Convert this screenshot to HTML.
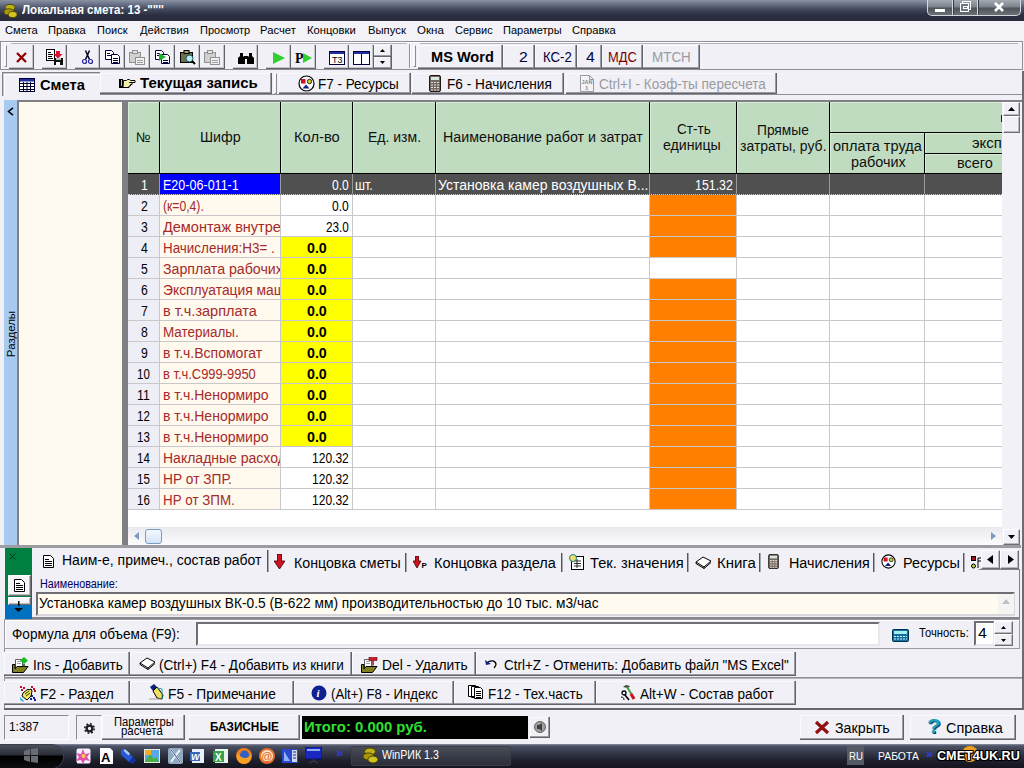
<!DOCTYPE html>
<html lang="ru">
<head>
<meta charset="utf-8">
<title>Локальная смета: 13</title>
<style>
*{box-sizing:border-box;margin:0;padding:0}
html,body{width:1024px;height:768px;overflow:hidden}
body{position:relative;background:#f0f0f6;font-family:"Liberation Sans","DejaVu Sans",sans-serif;font-size:11px;color:#000}
.a{position:absolute;white-space:nowrap}
span.a{line-height:1.15;transform-origin:0 0}
#title{left:0;top:0;width:1024px;height:21px;background:linear-gradient(#8a92a4 0,#6b7388 4px,#454b60 9px,#2b2f42 15px,#262a3a 21px)}
#ctl{left:927px;top:0;width:94px;height:16px;border:1px solid #d4d8de;border-top:none;border-radius:0 0 5px 5px;background:linear-gradient(#a4aab2 0,#7c828a 7px,#4e535a 8px,#6c7076 15px)}
#ctl i{position:absolute;top:0;height:15px;border-left:1px solid #d4d8de;border-right:1px solid #3a3e46;width:2px}
#menu{left:0;top:21px;width:1024px;height:20px;background:#f2f2f7}
.btn{background:#f0f0f6;border:1px solid;border-color:#fff #6e6e74 #6e6e74 #fff;box-shadow:inset -1px -1px 0 #b9b9c0}
.sunk{border:1px solid;border-color:#8a8a90 #fff #fff #8a8a90}
.grp{border:1px solid #9a9aa0;box-shadow:inset 1px 1px 0 #fff}
.rz{border-right:1px solid #62626a;border-bottom:1px solid #62626a;box-shadow:inset -1px -1px 0 #9c9ca4, inset 1px 1px 0 #fafafd}
.grip{width:3px;border:1px solid;border-color:#fff #8c8c92 #8c8c92 #fff}
#grid{left:128px;top:102px;width:874px;height:425px;background:#fff;overflow:hidden}
.h{background:#c0dcc0;border-right:1px solid #000;border-bottom:1px solid #000;box-shadow:inset 1px 1px 0 #d8ecd8}
.r{left:0;width:874px;height:21px;border-bottom:1px solid #c8c8cc}
.c{top:0;height:20px;border-right:1px solid #c8c8cc;overflow:hidden}
.n{left:0;width:32px;background:#eeeef6}
.s{left:32px;width:121px;background:#fff9ee}
.q{left:153px;width:72px}
.y{background:#ff0}
.o{left:522px;width:87px;background:#ff8000}
.ps{top:553px;width:2px;height:19px;background:#55555a;border-right:1px solid #a8a8ae}
#task{left:0;top:744px;width:1024px;height:24px;background:linear-gradient(#8a90a0 0,#4c5264 2px,#343849 9px,#1c1e2a 17px,#14151e 24px)}
</style>
</head>
<body>
<div id="title" class="a"><div id="ctl" class="a"><i style="left:24px"></i><i style="left:49px"></i></div></div>
<svg class="a" style="left:3px;top:3px" width="15" height="16" viewBox="0 0 17 17"><ellipse cx="8" cy="4.500" rx="5.500" ry="3.500" fill="#c0b018" stroke="#484000"/><ellipse cx="6.500" cy="9.500" rx="5.500" ry="3.500" fill="#a89808" stroke="#484000"/><ellipse cx="11" cy="12.500" rx="5" ry="3.500" fill="#d0c020" stroke="#484000"/></svg>
<span class="a" style="left:22px;top:4px;font-size:12px;transform:scaleX(0.962);font-weight:bold;color:#fff">Локальная смета: 13 -""''</span>
<div class="a " style="left:935px;top:9px;width:10px;height:3px;background:#fff"></div>
<div class="a " style="left:962px;top:1px;width:9px;height:9px;border:1px solid #fff"></div>
<div class="a " style="left:960px;top:3px;width:9px;height:9px;border:1px solid #fff;background:#70767e"></div>
<div class="a " style="left:963px;top:6px;width:5px;height:3px;border:1px solid #fff"></div>
<svg class="a" style="left:994px;top:2px" width="10" height="10" viewBox="0 0 10 10"><path d="M1 1l8 8M9 1l-8 8" stroke="#fff" stroke-width="2.600" fill="none"/></svg>
<div id="menu" class="a"></div>
<span class="a" style="left:5px;top:24px;font-size:11px;transform:scaleX(1.016);">Смета</span>
<span class="a" style="left:48px;top:24px;font-size:11px;transform:scaleX(1.017);">Правка</span>
<span class="a" style="left:97px;top:24px;font-size:11px;">Поиск</span>
<span class="a" style="left:140px;top:24px;font-size:11px;transform:scaleX(1.012);">Действия</span>
<span class="a" style="left:200px;top:24px;font-size:11px;">Просмотр</span>
<span class="a" style="left:260px;top:24px;font-size:11px;transform:scaleX(1.023);">Расчет</span>
<span class="a" style="left:307px;top:24px;font-size:11px;transform:scaleX(1.023);">Концовки</span>
<span class="a" style="left:368px;top:24px;font-size:11px;transform:scaleX(1.025);">Выпуск</span>
<span class="a" style="left:417px;top:24px;font-size:11px;transform:scaleX(1.048);">Окна</span>
<span class="a" style="left:455px;top:24px;font-size:11px;">Сервис</span>
<span class="a" style="left:503px;top:24px;font-size:11px;">Параметры</span>
<span class="a" style="left:572px;top:24px;font-size:11px;transform:scaleX(1.015);">Справка</span>
<div class="a " style="left:0px;top:41px;width:1023px;height:29px;border:1px solid #8e8e94;box-shadow:inset 1px 1px 0 #fff"></div>
<div class="a " style="left:11px;top:43px;width:396px;height:1px;background:#b4b4ba"></div>
<div class="a " style="left:420px;top:43px;width:598px;height:1px;background:#b4b4ba"></div>
<div class="a grip" style="left:4px;top:45px;width:3px;height:22px;"></div>
<div class="a " style="left:409px;top:44px;width:2px;height:24px;border-left:1px solid #8e8e94;border-right:1px solid #fff"></div>
<div class="a grip" style="left:413px;top:45px;width:3px;height:22px;"></div>
<div class="a rz" style="left:9px;top:45px;width:25px;height:24px;box-shadow:inset -1px -1px 0 #c4c4ca"></div>
<svg class="a" style="left:15px;top:51px" width="13" height="13" viewBox="0 0 13 13"><path d="M2 2l9 9M11 2l-9 9" stroke="#900000" stroke-width="2.300" fill="none"/></svg>
<div class="a rz" style="left:42px;top:45px;width:25px;height:24px;box-shadow:inset -1px -1px 0 #c4c4ca"></div>
<svg class="a" style="left:46px;top:49px" width="18" height="17" viewBox="0 0 18 17"><rect x=".5" y=".5" width="8" height="11" fill="#fff" stroke="#000"/><path d="M2 3.500h3M2 5.500h5M2 7.500h4M2 9.500h5" stroke="#000"/><path d="M10 2h4v3h2.500l-4.500 4.500l-4.500-4.500h2.500z" fill="#e01030"/><rect x="8" y="9" width="9" height="7" fill="#101010"/><rect x="10" y="13" width="4" height="3" fill="#fff"/><rect x="10" y="9" width="5" height="2" fill="#c0c0c0"/></svg>
<div class="a rz" style="left:75px;top:45px;width:25px;height:24px;box-shadow:inset -1px -1px 0 #c4c4ca"></div>
<svg class="a" style="left:80px;top:50px" width="15" height="15" viewBox="0 0 15 15"><path d="M5.500 .5l4 9M9.500 .5l-4 9" stroke="#000020" stroke-width="1.500" fill="none"/><circle cx="4.500" cy="11.500" r="2" fill="none" stroke="#2020a0" stroke-width="1.200"/><circle cx="10.500" cy="11.500" r="2" fill="none" stroke="#2020a0" stroke-width="1.200"/></svg>
<div class="a rz" style="left:100px;top:45px;width:25px;height:24px;box-shadow:inset -1px -1px 0 #c4c4ca"></div>
<svg class="a" style="left:105px;top:50px" width="16" height="15" viewBox="0 0 16 15"><path d="M.5 .5h6l2 2v7h-8z" fill="#fff" stroke="#000040"/><path d="M2 3.500h3M2 5.500h4" stroke="#000040"/><path d="M6.500 4.500h6l2 2v7h-8z" fill="#fff" stroke="#000040"/><path d="M8 8.500h5M8 10.500h5M8 12.500h5" stroke="#000040"/></svg>
<div class="a rz" style="left:125px;top:45px;width:25px;height:24px;box-shadow:inset -1px -1px 0 #c4c4ca"></div>
<svg class="a" style="left:129px;top:50px" width="17" height="16" viewBox="0 0 17 16"><rect x=".5" y="2.500" width="11" height="10" fill="#d0d0d0" stroke="#909090"/><rect x="3.500" y=".5" width="5" height="3" fill="#e4e4e4" stroke="#909090"/><rect x="6.500" y="7.500" width="9" height="7" fill="#f0f0f0" stroke="#909090"/><path d="M8 10.500h6M8 12.500h6" stroke="#a0a0a0"/></svg>
<div class="a rz" style="left:150px;top:45px;width:25px;height:24px;box-shadow:inset -1px -1px 0 #c4c4ca"></div>
<svg class="a" style="left:155px;top:50px" width="16" height="15" viewBox="0 0 16 15"><path d="M.5 .5h6l2 2v7h-8z" fill="#fff" stroke="#000040"/><path d="M2 3.500h3M2 5.500h3" stroke="#000040"/><path d="M6.500 4.500h6l2 2v7h-8z" fill="#fff" stroke="#000040"/><path d="M8 10.500h5M8 12.500h5" stroke="#000040"/><path d="M4 3l7 4l-7 4z" fill="#20b030"/></svg>
<div class="a rz" style="left:175px;top:45px;width:25px;height:24px;box-shadow:inset -1px -1px 0 #c4c4ca"></div>
<svg class="a" style="left:179px;top:49px" width="18" height="17" viewBox="0 0 18 17"><rect x="1.500" y="3.500" width="12" height="10" fill="#707048" stroke="#000"/><rect x="5" y="1.500" width="5" height="3" fill="#a0a070" stroke="#000"/><circle cx="10.500" cy="9.500" r="3.500" fill="#c0ecf0" stroke="#105060"/><path d="M13 12l3 3" stroke="#000" stroke-width="2"/></svg>
<div class="a rz" style="left:200px;top:45px;width:25px;height:24px;box-shadow:inset -1px -1px 0 #c4c4ca"></div>
<svg class="a" style="left:204px;top:50px" width="17" height="16" viewBox="0 0 17 16"><rect x=".5" y="2.500" width="11" height="10" fill="#d0d0d0" stroke="#909090"/><rect x="3.500" y=".5" width="5" height="3" fill="#e4e4e4" stroke="#909090"/><rect x="6.500" y="7.500" width="9" height="7" fill="#f0f0f0" stroke="#909090"/><path d="M8 10.500h6M8 12.500h6" stroke="#a0a0a0"/></svg>
<div class="a rz" style="left:233px;top:45px;width:25px;height:24px;box-shadow:inset -1px -1px 0 #c4c4ca"></div>
<svg class="a" style="left:237px;top:50px" width="18" height="16" viewBox="0 0 18 16"><path d="M3 3h3v3l2 2v6h-7v-6l2-2zM12 3h3v3l2 2v6h-7v-6l2-2z" fill="#000"/><rect x="7" y="6" width="4" height="3" fill="#000"/></svg>
<div class="a rz" style="left:266px;top:45px;width:25px;height:24px;box-shadow:inset -1px -1px 0 #c4c4ca"></div>
<svg class="a" style="left:271px;top:50px" width="16" height="16" viewBox="0 0 16 16"><path d="M2 2l12 6l-12 6z" fill="#30d030"/></svg>
<div class="a rz" style="left:291px;top:45px;width:25px;height:24px;box-shadow:inset -1px -1px 0 #c4c4ca"></div>
<svg class="a" style="left:295px;top:50px" width="18" height="16" viewBox="0 0 18 16"><text x="0" y="13" font-family="Liberation Serif,serif" font-weight="bold" font-size="14" fill="#000">P</text><path d="M8 3l9 5l-9 5z" fill="#30d030"/></svg>
<div class="a rz" style="left:324px;top:45px;width:25px;height:24px;box-shadow:inset -1px -1px 0 #c4c4ca"></div>
<svg class="a" style="left:329px;top:51px" width="16" height="14" viewBox="0 0 16 14"><rect x=".5" y=".5" width="15" height="13" fill="#fff" stroke="#000040"/><rect x="1" y="1" width="14" height="2" fill="#2030a0"/><text x="3" y="12" font-family="Liberation Sans,sans-serif" font-size="9" fill="#000">Т3</text></svg>
<div class="a rz" style="left:349px;top:45px;width:25px;height:24px;box-shadow:inset -1px -1px 0 #c4c4ca"></div>
<svg class="a" style="left:353px;top:51px" width="17" height="14" viewBox="0 0 17 14"><rect x=".5" y=".5" width="16" height="13" fill="#fff" stroke="#000040"/><rect x="1" y="1" width="15" height="2" fill="#2030a0"/><path d="M8.500 3v11" stroke="#000040"/></svg>
<div class="a rz" style="left:374px;top:45px;width:18px;height:12px;"><svg class="a" style="left:6px;top:4px" width="5" height="3" viewBox="0 0 5 3"><path d="M0 3l2.500-3l2.500 3z" fill="#000"/></svg></div>
<div class="a rz" style="left:374px;top:57px;width:18px;height:12px;"><svg class="a" style="left:6px;top:4px" width="5" height="3" viewBox="0 0 5 3"><path d="M0 0l2.500 3l2.500-3z" fill="#000"/></svg></div>
<div class="a rz" style="left:418px;top:45px;width:85px;height:24px;"></div>
<span class="a" style="left:431px;top:49px;font-size:14px;transform:scaleX(1.040);font-weight:bold">MS Word</span>
<div class="a rz" style="left:503px;top:45px;width:32px;height:24px;"></div>
<span class="a" style="left:519px;top:49px;font-size:14px;transform:scaleX(1.129);color:#000040">2</span>
<div class="a rz" style="left:535px;top:45px;width:42px;height:24px;"></div>
<span class="a" style="left:543px;top:49px;font-size:14px;transform:scaleX(0.942);color:#000040">КС-2</span>
<div class="a rz" style="left:577px;top:45px;width:25px;height:24px;"></div>
<span class="a" style="left:586px;top:49px;font-size:14px;transform:scaleX(1.129);color:#000040">4</span>
<div class="a rz" style="left:602px;top:45px;width:41px;height:24px;"></div>
<span class="a" style="left:608px;top:49px;font-size:14px;transform:scaleX(0.921);color:#800000">МДС</span>
<div class="a rz" style="left:643px;top:45px;width:57px;height:24px;"></div>
<span class="a" style="left:652px;top:49px;font-size:14px;transform:scaleX(0.960);color:#9a9aa0">МТСН</span>
<div class="a " style="left:2px;top:72px;width:98px;height:24px;border-top:1px solid #808086;border-left:1px solid #808086;box-shadow:inset 1px 1px 0 #c8c8ce,inset 2px 2px 0 #fff"></div>
<svg class="a" style="left:19px;top:78px" width="16" height="14" viewBox="0 0 16 14"><rect x=".5" y=".5" width="15" height="13" fill="#fff" stroke="#000030"/><rect x="1" y="1" width="14" height="2.500" fill="#2030a0"/><path d="M1 5.500h14M1 8.500h14M1 11.500h14M4.500 4v10M8 4v10M11.500 4v10" stroke="#000030" stroke-width="1"/></svg>
<span class="a" style="left:40px;top:77px;font-size:14px;transform:scaleX(1.049);font-weight:bold">Смета</span>
<div class="a rz" style="left:100px;top:73px;width:172px;height:21px;"></div>
<svg class="a" style="left:119px;top:78px" width="17" height="11" viewBox="0 0 17 11"><rect x="0" y="1" width="4" height="9" fill="#000"/><rect x="2" y="2" width="1" height="6" fill="#90d090"/><path d="M4.500 2.500h3l1-1h2l1 1h4.500v2h-5.500h2.500v2h-1.500v1.500h-1.500v1.500h-6z" fill="#f0f0a8" stroke="#000" stroke-width="1"/></svg>
<span class="a" style="left:140px;top:75px;font-size:14px;transform:scaleX(1.068);font-weight:bold">Текущая запись</span>
<div class="a grip" style="left:274px;top:73px;width:3px;height:21px;"></div>
<div class="a rz" style="left:279px;top:73px;width:132px;height:21px;"></div>
<svg class="a" style="left:298px;top:75px" width="17" height="17" viewBox="0 0 17 17"><circle cx="8.500" cy="8.500" r="7.500" fill="#fff" stroke="#000" stroke-width="1.200"/><rect x="3" y="4" width="4.500" height="4.500" fill="#d01020"/><circle cx="11.500" cy="6.500" r="2.200" fill="#c8d030" stroke="#000" stroke-width=".8"/><path d="M4.500 13.500l3.500-4l3.500 4z" fill="#102080"/></svg>
<span class="a" style="left:318px;top:76px;font-size:14px;transform:scaleX(0.962);">F7 - Ресурсы</span>
<div class="a rz" style="left:412px;top:73px;width:152px;height:21px;"></div>
<svg class="a" style="left:429px;top:75px" width="12" height="17" viewBox="0 0 12 17"><rect x=".5" y=".5" width="11" height="16" rx="1.500" fill="#706860" stroke="#201810"/><rect x="2" y="2" width="8" height="3" fill="#d8e8e0"/><path d="M2 7.500h8M2 10h8M2 12.500h8M2 15h8" stroke="#e8e0d8" stroke-width="1.200" stroke-dasharray="2 1"/></svg>
<span class="a" style="left:447px;top:76px;font-size:14px;transform:scaleX(0.974);">F6 - Начисления</span>
<div class="a rz" style="left:566px;top:73px;width:211px;height:21px;"></div>
<svg class="a" style="left:580px;top:75px" width="14" height="17" viewBox="0 0 14 17"><path d="M.5 .5h9l4 4v12h-13z" fill="#f4f4f8" stroke="#9a9aa0"/><path d="M9.500 .5v4h4" fill="none" stroke="#9a9aa0"/><text x="1.500" y="9" font-size="5.500" font-family="Liberation Sans,sans-serif" font-weight="bold" fill="#8a8a90">JAN</text><text x="5" y="15" font-size="6" font-family="Liberation Sans,sans-serif" font-weight="bold" fill="#8a8a90">1</text></svg>
<span class="a" style="left:599px;top:76px;font-size:14px;transform:scaleX(0.968);color:#9a9aa0">Ctrl+I - Коэф-ты пересчета</span>
<div class="a " style="left:100px;top:94px;width:923px;height:1px;background:#8e8e94"></div>
<div class="a " style="left:1022px;top:71px;width:1px;height:24px;background:#8e8e94"></div>
<div class="a " style="left:4px;top:100px;width:14px;height:446px;background:#a6caf0"></div>
<svg class="a" style="left:7px;top:107px" width="7" height="9" viewBox="0 0 7 9"><path d="M6 .8L1.500 4.500L6 8.200" fill="none" stroke="#000" stroke-width="1.500"/></svg>
<div class="a" style="left:11px;top:334px;width:0;height:0"><span class="a" style="left:-26px;top:-7px;width:52px;text-align:center;transform-origin:50% 50%;transform:rotate(-90deg);font-size:11.5px;line-height:14px">Разделы</span></div>
<div class="a " style="left:17px;top:100px;width:107px;height:446px;border:2px solid #808084;border-bottom:none;background:#fffbf0"></div>
<div class="a " style="left:122px;top:100px;width:900px;height:447px;border:2px solid #808084;border-left-width:6px;border-right:none;border-bottom:1px solid #e8e8ec;background:#f4f4f8"></div>
<div class="a " style="left:1022px;top:71px;width:2px;height:639px;background:#6c6c74"></div>
<div id="grid" class="a"><div class="a h" style="left:0px;top:0px;width:32px;height:72px;"></div>
<div class="a h" style="left:32px;top:0px;width:121px;height:72px;"></div>
<div class="a h" style="left:153px;top:0px;width:72px;height:72px;"></div>
<div class="a h" style="left:225px;top:0px;width:83px;height:72px;"></div>
<div class="a h" style="left:308px;top:0px;width:214px;height:72px;"></div>
<div class="a h" style="left:522px;top:0px;width:87px;height:72px;"></div>
<div class="a h" style="left:609px;top:0px;width:93px;height:72px;"></div>
<div class="a h" style="left:702px;top:0px;width:180px;height:31px;"></div>
<div class="a h" style="left:702px;top:31px;width:95px;height:41px;"></div>
<div class="a h" style="left:797px;top:31px;width:90px;height:21px;"></div>
<div class="a h" style="left:797px;top:52px;width:90px;height:20px;"></div>
<div class="a " style="left:873px;top:13px;width:1px;height:7px;background:#202020"></div>
<span class="a" style="left:8px;top:27px;font-size:14px;transform:scaleX(0.985);color:#101010">№</span>
<span class="a" style="left:72px;top:27px;font-size:14px;transform:scaleX(1.021);color:#101010">Шифр</span>
<span class="a" style="left:166px;top:27px;font-size:14px;transform:scaleX(1.052);color:#101010">Кол-во</span>
<span class="a" style="left:240px;top:27px;font-size:14px;color:#101010">Ед. изм.</span>
<span class="a" style="left:315px;top:27px;font-size:14px;transform:scaleX(1.019);color:#101010">Наименование работ и затрат</span>
<span class="a" style="left:549px;top:19px;font-size:14px;transform:scaleX(0.969);color:#101010">Ст-ть</span>
<span class="a" style="left:535px;top:35px;font-size:14px;transform:scaleX(1.012);color:#101010">единицы</span>
<span class="a" style="left:629px;top:20px;font-size:14px;transform:scaleX(0.982);color:#101010">Прямые</span>
<span class="a" style="left:612px;top:36px;font-size:14px;color:#101010">затраты, руб.</span>
<span class="a" style="left:705px;top:36px;font-size:14px;transform:scaleX(1.039);color:#101010">оплата труда</span>
<span class="a" style="left:723px;top:52px;font-size:14px;transform:scaleX(1.030);color:#101010">рабочих</span>
<span class="a" style="left:844px;top:33px;font-size:14px;transform:scaleX(1.064);color:#101010">эксп</span>
<span class="a" style="left:829px;top:53px;font-size:14px;transform:scaleX(1.033);color:#101010">всего</span>
<div class="a r" style="top:72px;background:#505050;border-bottom:1px dotted #d0d0d0"><div class="a c n" style="background:#505050;border-right-color:#9a9a9a"><span class="a" style="left:13px;top:3px;font-size:14px;transform:scaleX(0.872);color:#fff">1</span></div><div class="a c s" style="background:#0000ff;border-right-color:#9a9a9a"><span class="a" style="left:3px;top:3px;font-size:14px;transform:scaleX(0.896);color:#fff">E20-06-011-1</span></div><div class="a c q" style="border-right-color:#9a9a9a"><span class="a" style="left:51px;top:3px;font-size:14px;transform:scaleX(0.863);color:#fff">0.0</span></div><div class="a c" style="left:225px;width:83px;border-right-color:#9a9a9a"><span class="a" style="left:2px;top:3px;font-size:14px;transform:scaleX(0.891);color:#fff">шт.</span></div><div class="a c" style="left:308px;width:214px;border-right-color:#9a9a9a"><span class="a" style="left:2px;top:3px;font-size:14px;color:#fff">Установка камер воздушных В...</span></div><div class="a c" style="left:522px;width:87px;border-right-color:#9a9a9a"><span class="a" style="left:45px;top:3px;font-size:14px;transform:scaleX(0.883);color:#fff">151.32</span></div><div class="a c" style="left:609px;width:93px;border-right-color:#9a9a9a"></div><div class="a c" style="left:702px;width:95px;border-right-color:#9a9a9a"></div><div class="a c" style="left:797px;width:90px;border-right-color:#9a9a9a"></div></div>
<div class="a r" style="top:93px"><div class="a c n"><span class="a" style="left:13px;top:3px;font-size:14px;transform:scaleX(0.872);">2</span></div><div class="a c s"><span class="a" style="left:3px;top:3px;font-size:14px;transform:scaleX(0.868);color:#a52a2a">(к=0,4).</span></div><div class="a c q "><span class="a" style="left:51px;top:3px;font-size:14px;transform:scaleX(0.863);">0.0</span></div><div class="a c" style="left:225px;width:83px"></div><div class="a c" style="left:308px;width:214px"></div><div class="a c o"></div><div class="a c" style="left:609px;width:93px"></div><div class="a c" style="left:702px;width:95px"></div><div class="a c" style="left:797px;width:90px"></div></div>
<div class="a r" style="top:114px"><div class="a c n"><span class="a" style="left:13px;top:3px;font-size:14px;transform:scaleX(0.872);">3</span></div><div class="a c s"><span class="a" style="left:3px;top:3px;font-size:14px;transform:scaleX(1.035);color:#a52a2a">Демонтаж внутре</span></div><div class="a c q "><span class="a" style="left:45px;top:3px;font-size:14px;transform:scaleX(0.837);">23.0</span></div><div class="a c" style="left:225px;width:83px"></div><div class="a c" style="left:308px;width:214px"></div><div class="a c o"></div><div class="a c" style="left:609px;width:93px"></div><div class="a c" style="left:702px;width:95px"></div><div class="a c" style="left:797px;width:90px"></div></div>
<div class="a r" style="top:135px"><div class="a c n"><span class="a" style="left:13px;top:3px;font-size:14px;transform:scaleX(0.872);">4</span></div><div class="a c s"><span class="a" style="left:3px;top:3px;font-size:14px;transform:scaleX(0.959);color:#a52a2a">Начисления:Н3= .</span></div><div class="a c q y"><span class="a" style="left:26px;top:3px;font-size:14px;transform:scaleX(1.017);font-weight:bold">0.0</span></div><div class="a c" style="left:225px;width:83px"></div><div class="a c" style="left:308px;width:214px"></div><div class="a c o"></div><div class="a c" style="left:609px;width:93px"></div><div class="a c" style="left:702px;width:95px"></div><div class="a c" style="left:797px;width:90px"></div></div>
<div class="a r" style="top:156px"><div class="a c n"><span class="a" style="left:13px;top:3px;font-size:14px;transform:scaleX(0.872);">5</span></div><div class="a c s"><span class="a" style="left:3px;top:3px;font-size:14px;transform:scaleX(1.012);color:#a52a2a">Зарплата рабочих</span></div><div class="a c q y"><span class="a" style="left:26px;top:3px;font-size:14px;transform:scaleX(1.017);font-weight:bold">0.0</span></div><div class="a c" style="left:225px;width:83px"></div><div class="a c" style="left:308px;width:214px"></div><div class="a c" style="left:522px;width:87px"></div><div class="a c" style="left:609px;width:93px"></div><div class="a c" style="left:702px;width:95px"></div><div class="a c" style="left:797px;width:90px"></div></div>
<div class="a r" style="top:177px"><div class="a c n"><span class="a" style="left:13px;top:3px;font-size:14px;transform:scaleX(0.872);">6</span></div><div class="a c s"><span class="a" style="left:3px;top:3px;font-size:14px;transform:scaleX(0.987);color:#a52a2a">Эксплуатация маш</span></div><div class="a c q y"><span class="a" style="left:26px;top:3px;font-size:14px;transform:scaleX(1.017);font-weight:bold">0.0</span></div><div class="a c" style="left:225px;width:83px"></div><div class="a c" style="left:308px;width:214px"></div><div class="a c o"></div><div class="a c" style="left:609px;width:93px"></div><div class="a c" style="left:702px;width:95px"></div><div class="a c" style="left:797px;width:90px"></div></div>
<div class="a r" style="top:198px"><div class="a c n"><span class="a" style="left:13px;top:3px;font-size:14px;transform:scaleX(0.872);">7</span></div><div class="a c s"><span class="a" style="left:3px;top:3px;font-size:14px;transform:scaleX(1.036);color:#a52a2a">в т.ч.зарплата</span></div><div class="a c q y"><span class="a" style="left:26px;top:3px;font-size:14px;transform:scaleX(1.017);font-weight:bold">0.0</span></div><div class="a c" style="left:225px;width:83px"></div><div class="a c" style="left:308px;width:214px"></div><div class="a c o"></div><div class="a c" style="left:609px;width:93px"></div><div class="a c" style="left:702px;width:95px"></div><div class="a c" style="left:797px;width:90px"></div></div>
<div class="a r" style="top:219px"><div class="a c n"><span class="a" style="left:13px;top:3px;font-size:14px;transform:scaleX(0.872);">8</span></div><div class="a c s"><span class="a" style="left:3px;top:3px;font-size:14px;transform:scaleX(0.961);color:#a52a2a">Материалы.</span></div><div class="a c q y"><span class="a" style="left:26px;top:3px;font-size:14px;transform:scaleX(1.017);font-weight:bold">0.0</span></div><div class="a c" style="left:225px;width:83px"></div><div class="a c" style="left:308px;width:214px"></div><div class="a c o"></div><div class="a c" style="left:609px;width:93px"></div><div class="a c" style="left:702px;width:95px"></div><div class="a c" style="left:797px;width:90px"></div></div>
<div class="a r" style="top:240px"><div class="a c n"><span class="a" style="left:13px;top:3px;font-size:14px;transform:scaleX(0.872);">9</span></div><div class="a c s"><span class="a" style="left:3px;top:3px;font-size:14px;color:#a52a2a">в т.ч.Вспомогат</span></div><div class="a c q y"><span class="a" style="left:26px;top:3px;font-size:14px;transform:scaleX(1.017);font-weight:bold">0.0</span></div><div class="a c" style="left:225px;width:83px"></div><div class="a c" style="left:308px;width:214px"></div><div class="a c o"></div><div class="a c" style="left:609px;width:93px"></div><div class="a c" style="left:702px;width:95px"></div><div class="a c" style="left:797px;width:90px"></div></div>
<div class="a r" style="top:261px"><div class="a c n"><span class="a" style="left:9px;top:3px;font-size:14px;transform:scaleX(0.822);">10</span></div><div class="a c s"><span class="a" style="left:3px;top:3px;font-size:14px;transform:scaleX(0.923);color:#a52a2a">в т.ч.С999-9950</span></div><div class="a c q y"><span class="a" style="left:26px;top:3px;font-size:14px;transform:scaleX(1.017);font-weight:bold">0.0</span></div><div class="a c" style="left:225px;width:83px"></div><div class="a c" style="left:308px;width:214px"></div><div class="a c o"></div><div class="a c" style="left:609px;width:93px"></div><div class="a c" style="left:702px;width:95px"></div><div class="a c" style="left:797px;width:90px"></div></div>
<div class="a r" style="top:282px"><div class="a c n"><span class="a" style="left:9px;top:3px;font-size:14px;transform:scaleX(0.880);">11</span></div><div class="a c s"><span class="a" style="left:3px;top:3px;font-size:14px;color:#a52a2a">в т.ч.Ненормиро</span></div><div class="a c q y"><span class="a" style="left:26px;top:3px;font-size:14px;transform:scaleX(1.017);font-weight:bold">0.0</span></div><div class="a c" style="left:225px;width:83px"></div><div class="a c" style="left:308px;width:214px"></div><div class="a c o"></div><div class="a c" style="left:609px;width:93px"></div><div class="a c" style="left:702px;width:95px"></div><div class="a c" style="left:797px;width:90px"></div></div>
<div class="a r" style="top:303px"><div class="a c n"><span class="a" style="left:9px;top:3px;font-size:14px;transform:scaleX(0.822);">12</span></div><div class="a c s"><span class="a" style="left:3px;top:3px;font-size:14px;color:#a52a2a">в т.ч.Ненормиро</span></div><div class="a c q y"><span class="a" style="left:26px;top:3px;font-size:14px;transform:scaleX(1.017);font-weight:bold">0.0</span></div><div class="a c" style="left:225px;width:83px"></div><div class="a c" style="left:308px;width:214px"></div><div class="a c o"></div><div class="a c" style="left:609px;width:93px"></div><div class="a c" style="left:702px;width:95px"></div><div class="a c" style="left:797px;width:90px"></div></div>
<div class="a r" style="top:324px"><div class="a c n"><span class="a" style="left:9px;top:3px;font-size:14px;transform:scaleX(0.822);">13</span></div><div class="a c s"><span class="a" style="left:3px;top:3px;font-size:14px;color:#a52a2a">в т.ч.Ненормиро</span></div><div class="a c q y"><span class="a" style="left:26px;top:3px;font-size:14px;transform:scaleX(1.017);font-weight:bold">0.0</span></div><div class="a c" style="left:225px;width:83px"></div><div class="a c" style="left:308px;width:214px"></div><div class="a c o"></div><div class="a c" style="left:609px;width:93px"></div><div class="a c" style="left:702px;width:95px"></div><div class="a c" style="left:797px;width:90px"></div></div>
<div class="a r" style="top:345px"><div class="a c n"><span class="a" style="left:9px;top:3px;font-size:14px;transform:scaleX(0.822);">14</span></div><div class="a c s"><span class="a" style="left:3px;top:3px;font-size:14px;color:#a52a2a">Накладные расход</span></div><div class="a c q "><span class="a" style="left:31px;top:3px;font-size:14px;transform:scaleX(0.859);">120.32</span></div><div class="a c" style="left:225px;width:83px"></div><div class="a c" style="left:308px;width:214px"></div><div class="a c o"></div><div class="a c" style="left:609px;width:93px"></div><div class="a c" style="left:702px;width:95px"></div><div class="a c" style="left:797px;width:90px"></div></div>
<div class="a r" style="top:366px"><div class="a c n"><span class="a" style="left:9px;top:3px;font-size:14px;transform:scaleX(0.822);">15</span></div><div class="a c s"><span class="a" style="left:3px;top:3px;font-size:14px;transform:scaleX(0.980);color:#a52a2a">НР от ЗПР.</span></div><div class="a c q "><span class="a" style="left:31px;top:3px;font-size:14px;transform:scaleX(0.859);">120.32</span></div><div class="a c" style="left:225px;width:83px"></div><div class="a c" style="left:308px;width:214px"></div><div class="a c o"></div><div class="a c" style="left:609px;width:93px"></div><div class="a c" style="left:702px;width:95px"></div><div class="a c" style="left:797px;width:90px"></div></div>
<div class="a r" style="top:387px"><div class="a c n"><span class="a" style="left:9px;top:3px;font-size:14px;transform:scaleX(0.822);">16</span></div><div class="a c s"><span class="a" style="left:3px;top:3px;font-size:14px;transform:scaleX(0.955);color:#a52a2a">НР от ЗПМ.</span></div><div class="a c q "><span class="a" style="left:31px;top:3px;font-size:14px;transform:scaleX(0.859);">120.32</span></div><div class="a c" style="left:225px;width:83px"></div><div class="a c" style="left:308px;width:214px"></div><div class="a c o"></div><div class="a c" style="left:609px;width:93px"></div><div class="a c" style="left:702px;width:95px"></div><div class="a c" style="left:797px;width:90px"></div></div></div>
<div class="a " style="left:1002px;top:102px;width:19px;height:444px;background:#f2f2f6"></div>
<div class="a btn" style="left:1003px;top:102px;width:17px;height:14px;"><svg class="a" style="left:4px;top:4px" width="7" height="4" viewBox="0 0 7 4"><path d="M0 4l3.500-4l3.500 4z"/></svg></div>
<div class="a btn" style="left:1003px;top:116px;width:17px;height:17px;"></div>
<div class="a btn" style="left:1003px;top:529px;width:17px;height:16px;"><svg class="a" style="left:4px;top:5px" width="7" height="4" viewBox="0 0 7 4"><path d="M0 0l3.500 4l3.500-4z"/></svg></div>
<div class="a " style="left:128px;top:527px;width:874px;height:18px;background:linear-gradient(#e9e9ee,#fcfcfe)"></div>
<svg class="a" style="left:134px;top:532px" width="5" height="8" viewBox="0 0 5 8"><path d="M5 0L0 4l5 4z" fill="#7a9ac0"/></svg>
<svg class="a" style="left:991px;top:532px" width="5" height="8" viewBox="0 0 5 8"><path d="M0 0l5 4l-5 4z" fill="#7a9ac0"/></svg>
<div class="a " style="left:145px;top:529px;width:17px;height:15px;border:1px solid #7a9ac8;border-radius:3px;background:linear-gradient(#f4f8ff,#d4e4f8)"></div>
<div class="a " style="left:0px;top:545px;width:1021px;height:3px;background:#9c9ca2"></div>
<div class="a " style="left:5px;top:548px;width:27px;height:71px;background:#008040"></div>
<div class="a " style="left:5px;top:604px;width:27px;height:15px;background:#0070c0"></div>
<svg class="a" style="left:9px;top:553px" width="7" height="7" viewBox="0 0 7 7"><path d="M.5 .5l6 6M6.500 .5l-6 6" stroke="#003018" stroke-width="1"/></svg>
<div class="a btn" style="left:8px;top:575px;width:23px;height:21px;background:#f6f6fa"><svg class="a" style="left:5px;top:3px" width="11" height="13" viewBox="0 0 11 13"><path d="M.5 .5h7l3 3v9h-10z" fill="#fff" stroke="#000"/><path d="M2 4.500h4M2 6.500h7M2 8.500h7M2 10.500h7" stroke="#000"/></svg></div>
<div class="a btn" style="left:8px;top:597px;width:23px;height:8px;background:#f6f6fa"></div>
<svg class="a" style="left:14px;top:601px" width="9" height="12" viewBox="0 0 9 12"><rect x="4" y="0" width="1.500" height="5" fill="#000"/><path d="M0 7h9l-4.500 4z" fill="#000"/></svg>
<svg class="a" style="left:43px;top:555px" width="11" height="13" viewBox="0 0 11 13"><path d="M.5 .5h7l3 3v9h-10z" fill="#fff" stroke="#000"/><path d="M2 4.500h4M2 6.500h7M2 8.500h7M2 10.500h7" stroke="#000"/></svg>
<span class="a" style="left:62px;top:552px;font-size:14px;">Наим-е, примеч., состав работ</span>
<div class="a ps" style="left:267px;top:550px;width:2px;height:22px;"></div>
<svg class="a" style="left:274px;top:554px" width="11" height="16" viewBox="0 0 11 16"><path d="M3.500 0h4v7h3.500l-5.500 8l-5.500-8h3.500z" fill="#d01020" stroke="#400" stroke-width=".8"/></svg>
<span class="a" style="left:294px;top:555px;font-size:14px;transform:scaleX(1.014);">Концовка сметы</span>
<div class="a ps" style="left:405px;top:553px;width:2px;height:19px;"></div>
<svg class="a" style="left:413px;top:556px" width="16" height="14" viewBox="0 0 16 14"><path d="M2.500 0h3v5h2.500l-4 7l-4-7h2.500z" fill="#d01020" stroke="#400" stroke-width=".8"/><text x="8.500" y="12" font-size="8" font-weight="bold" font-family="Liberation Sans,sans-serif">Р</text></svg>
<span class="a" style="left:434px;top:555px;font-size:14px;transform:scaleX(1.034);">Концовка раздела</span>
<div class="a ps" style="left:561px;top:553px;width:2px;height:19px;"></div>
<svg class="a" style="left:568px;top:553px" width="17" height="17" viewBox="0 0 17 17"><rect x="3.500" y="3.500" width="12" height="13" fill="#fff" stroke="#000"/><path d="M6 8h7M6 10.500h7M6 13h7M9 6v9" stroke="#000" stroke-width=".8"/><circle cx="5" cy="5" r="3.500" fill="#e8e070" stroke="#208080"/></svg>
<span class="a" style="left:590px;top:555px;font-size:14px;transform:scaleX(1.050);">Тек. значения</span>
<div class="a ps" style="left:687px;top:553px;width:2px;height:19px;"></div>
<svg class="a" style="left:695px;top:556px" width="17" height="13" viewBox="0 0 17 13"><path d="M1 6l7-5l8 4l-7 6z" fill="#fff" stroke="#000"/><path d="M1 6v1.500l8 5v-1.500" fill="none" stroke="#000"/><path d="M9 12.500l7-6" stroke="#000"/></svg>
<span class="a" style="left:717px;top:555px;font-size:14px;transform:scaleX(1.069);">Книга</span>
<div class="a ps" style="left:759px;top:553px;width:2px;height:19px;"></div>
<svg class="a" style="left:768px;top:554px" width="11" height="15" viewBox="0 0 12 17"><rect x=".5" y=".5" width="11" height="16" rx="1.500" fill="#706860" stroke="#201810"/><rect x="2" y="2" width="8" height="3" fill="#d8e8e0"/><path d="M2 7.500h8M2 10h8M2 12.500h8M2 15h8" stroke="#e8e0d8" stroke-width="1.200" stroke-dasharray="2 1"/></svg>
<span class="a" style="left:789px;top:555px;font-size:14px;transform:scaleX(1.025);">Начисления</span>
<div class="a ps" style="left:873px;top:553px;width:2px;height:19px;"></div>
<svg class="a" style="left:881px;top:554px" width="15" height="15" viewBox="0 0 17 17"><circle cx="8.500" cy="8.500" r="7.500" fill="#fff" stroke="#000" stroke-width="1.200"/><rect x="3" y="4" width="4.500" height="4.500" fill="#d01020"/><circle cx="11.500" cy="6.500" r="2.200" fill="#c8d030" stroke="#000" stroke-width=".8"/><path d="M4.500 13.500l3.500-4l3.500 4z" fill="#102080"/></svg>
<span class="a" style="left:903px;top:555px;font-size:14px;transform:scaleX(1.029);">Ресурсы</span>
<div class="a ps" style="left:963px;top:553px;width:2px;height:19px;"></div>
<svg class="a" style="left:971px;top:555px" width="10" height="15" viewBox="0 0 10 15"><rect x=".5" y="1.500" width="4" height="4" fill="#a01020" stroke="#000"/><circle cx="2.500" cy="11" r="2" fill="#c8d030" stroke="#000"/><path d="M7 3v10M7 3h3M7 6h3" stroke="#000" fill="none"/></svg>
<div class="a btn" style="left:981px;top:550px;width:19px;height:19px;"><svg class="a" style="left:5px;top:4px" width="6" height="9" viewBox="0 0 6 9"><path d="M6 0L0 4.500l6 4.500z"/></svg></div>
<div class="a btn" style="left:1000px;top:550px;width:19px;height:19px;"><svg class="a" style="left:7px;top:4px" width="6" height="9" viewBox="0 0 6 9"><path d="M0 0l6 4.500l-6 4.500z"/></svg></div>
<div class="a " style="left:1019px;top:570px;width:1px;height:48px;background:#808086"></div>
<div class="a " style="left:979px;top:569px;width:41px;height:1px;background:#808086"></div>
<div class="a " style="left:32px;top:617px;width:988px;height:2px;background:#86868c"></div>
<span class="a" style="left:40px;top:578px;font-size:12px;transform:scaleX(0.899);color:#000060">Наименование:</span>
<div class="a " style="left:36px;top:592px;width:979px;height:24px;background:#fffbf0;border:2px solid;border-color:#6e6e74 #d8d8dc #d8d8dc #6e6e74"></div>
<span class="a" style="left:39px;top:595px;font-size:14px;transform:scaleX(0.981);">Установка камер воздушных ВК-0.5 (В-622 мм) производительностью до 10 тыс. м3/час</span>
<div class="a " style="left:998px;top:594px;width:16px;height:20px;background:#f6f4f0"><svg class="a" style="left:4px;top:5px" width="8" height="5" viewBox="0 0 8 5"><path d="M0 5l4-5l4 5z" fill="#c0c0c8"/></svg></div>
<div class="a grp" style="left:4px;top:619px;width:1016px;height:30px;"></div>
<span class="a" style="left:12px;top:626px;font-size:14px;transform:scaleX(0.970);">Формула для объема (F9):</span>
<div class="a " style="left:196px;top:622px;width:684px;height:24px;background:#fff;border:2px solid;border-color:#6e6e74 #e8e8ec #e8e8ec #6e6e74"></div>
<svg class="a" style="left:892px;top:629px" width="17" height="13" viewBox="0 0 17 13"><rect x=".5" y=".5" width="16" height="12" rx="1" fill="#1070a0" stroke="#003050"/><rect x="2" y="2" width="13" height="3" fill="#a0f0f0"/><path d="M2 7.500h13M2 10h13" stroke="#d0f0ff" stroke-dasharray="2 1"/></svg>
<span class="a" style="left:919px;top:627px;font-size:12px;transform:scaleX(0.932);">Точность:</span>
<div class="a " style="left:974px;top:621px;width:21px;height:25px;background:#fff;border:2px solid;border-color:#6e6e74 #e8e8ec #e8e8ec #6e6e74"></div>
<span class="a" style="left:978px;top:625px;font-size:14px;transform:scaleX(1.129);">4</span>
<div class="a btn" style="left:994px;top:621px;width:19px;height:13px;"><svg class="a" style="left:6px;top:4px" width="5" height="3" viewBox="0 0 5 3"><path d="M0 3l2.500-3l2.500 3z"/></svg></div>
<div class="a btn" style="left:994px;top:634px;width:19px;height:12px;"><svg class="a" style="left:6px;top:4px" width="5" height="3" viewBox="0 0 5 3"><path d="M0 0l2.500 3l2.500-3z"/></svg></div>
<div class="a " style="left:4px;top:649px;width:1px;height:59px;background:#8e8e94"></div>
<div class="a " style="left:4px;top:677px;width:1018px;height:2px;background:#8e8e94;border-bottom:1px solid #b4b4ba"></div>
<div class="a " style="left:4px;top:708px;width:1020px;height:2px;background:#66666e"></div>
<div class="a rz" style="left:4px;top:652px;width:126px;height:24px;"></div>
<svg class="a" style="left:12px;top:657px" width="17" height="16" viewBox="0 0 17 16"><path d="M3.500 2.500h7v8h-7z" fill="#fff" stroke="#606060"/><path d="M5 4.500h4M5 6.500h4" stroke="#a0a0a0"/><path d="M.5 7.500v8h11l4.500-6h-11l-2 2.500v-4.500z" fill="#808020" stroke="#000"/><path d="M12 0l4 3.500l-4 3.500l-4-3.500z" fill="#10c020"/><path d="M12 7v2.500" stroke="#006010" stroke-width="1.500"/></svg>
<span class="a" style="left:33px;top:657px;font-size:14px;transform:scaleX(0.966);">Ins - Добавить</span>
<div class="a rz" style="left:130px;top:652px;width:222px;height:24px;"></div>
<svg class="a" style="left:139px;top:657px" width="17" height="13" viewBox="0 0 17 13"><path d="M1 6l7-5l8 4l-7 6z" fill="#fff" stroke="#000"/><path d="M1 6v1.500l8 5v-1.500" fill="none" stroke="#000"/><path d="M9 12.500l7-6" stroke="#000"/></svg>
<span class="a" style="left:159px;top:657px;font-size:14px;transform:scaleX(0.970);">(Ctrl+) F4 - Добавить из книги</span>
<div class="a rz" style="left:352px;top:652px;width:124px;height:24px;"></div>
<svg class="a" style="left:361px;top:657px" width="17" height="16" viewBox="0 0 17 16"><path d="M3.500 2.500h7v8h-7z" fill="#fff" stroke="#606060"/><path d="M5 4.500h4M5 6.500h4" stroke="#a0a0a0"/><path d="M.5 7.500v8h11l4.500-6h-11l-2 2.500v-4.500z" fill="#808020" stroke="#000"/><rect x="8" y=".5" width="8" height="3" fill="#d01828" stroke="#600" stroke-width=".6"/><path d="M12 3.500v5" stroke="#802020" stroke-width="1.500"/></svg>
<span class="a" style="left:382px;top:657px;font-size:14px;transform:scaleX(0.987);">Del - Удалить</span>
<div class="a rz" style="left:476px;top:652px;width:320px;height:24px;"></div>
<svg class="a" style="left:485px;top:659px" width="13" height="10" viewBox="0 0 13 10"><path d="M2 4c3-3 8-3 9 1c0 2-1 3-2 4" fill="none" stroke="#000" stroke-width="1.300"/><path d="M0 1l1 5l5-1z" fill="#102080"/></svg>
<span class="a" style="left:504px;top:657px;font-size:14px;transform:scaleX(0.960);">Ctrl+Z - Отменить: Добавить файл "MS Excel"</span>
<div class="a rz" style="left:4px;top:681px;width:126px;height:24px;"></div>
<svg class="a" style="left:20px;top:686px" width="17" height="16" viewBox="0 0 17 16"><path d="M0 0h2v2h-2zM3 1h2v2h-2zM1 3h2v2h-2zM11 0h2v2h-2zM13 2h2v2h-2zM10 3h2v2h-2zM14 4h2v2h-2z" fill="#c01030"/><path d="M11 9h2v2h-2zM13 11h2v2h-2zM10 12h2v2h-2zM14 13h2v2h-2z" fill="#1020a0"/><path d="M3 7l5-4l1 1l2-1l1 2l-1 5l-4 4l-5-4z" fill="#f0e860" stroke="#000"/><path d="M5 8l4-3M6 10l4-3" stroke="#000" stroke-width=".8"/><path d="M0 11l4 4l-1 1l-4-3z" fill="#30b0e0"/></svg>
<span class="a" style="left:40px;top:686px;font-size:14px;transform:scaleX(0.983);">F2 - Раздел</span>
<div class="a rz" style="left:130px;top:681px;width:164px;height:24px;"></div>
<svg class="a" style="left:148px;top:684px" width="16" height="17" viewBox="0 0 16 17"><path d="M2 3l4-3l3 3l-4 4z" fill="#102080"/><path d="M5 7l4-4l6 8l-1 4l-5-1z" fill="#f0e060" stroke="#000"/><path d="M1 15h12" stroke="#a0a0a0"/><path d="M9 4l5 1v10" fill="none" stroke="#20a0a0"/></svg>
<span class="a" style="left:168px;top:686px;font-size:14px;transform:scaleX(0.982);">F5 - Примечание</span>
<div class="a rz" style="left:294px;top:681px;width:160px;height:24px;"></div>
<svg class="a" style="left:311px;top:685px" width="16" height="16" viewBox="0 0 16 16"><circle cx="8" cy="8" r="7.500" fill="#102090"/><text x="5.500" y="12" font-family="Liberation Serif,serif" font-style="italic" font-weight="bold" font-size="11" fill="#fff">i</text></svg>
<span class="a" style="left:331px;top:686px;font-size:14px;transform:scaleX(0.941);">(Alt+) F8 - Индекс</span>
<div class="a rz" style="left:454px;top:681px;width:142px;height:24px;"></div>
<svg class="a" style="left:468px;top:685px" width="16" height="15" viewBox="0 0 16 15"><path d="M.5 .5h7v11h-7zM3.500 1.500h7v11h-7z" fill="#fff" stroke="#000"/><path d="M6.500 2.500h6l2 2v9h-8z" fill="#fff" stroke="#000"/><path d="M8 6.500h5M8 8.500h5M8 10.500h5M8 12.500h5" stroke="#000"/></svg>
<span class="a" style="left:488px;top:686px;font-size:14px;transform:scaleX(0.962);">F12 - Тех.часть</span>
<div class="a rz" style="left:596px;top:681px;width:200px;height:24px;"></div>
<svg class="a" style="left:620px;top:684px" width="17" height="17" viewBox="0 0 17 17"><path d="M3 3l3-2l4 1l-2 2z" fill="#404040"/><path d="M7 3l7 11" stroke="#40a040" stroke-width="2"/><path d="M11 10l3 5" stroke="#d01020" stroke-width="3"/><circle cx="4" cy="9" r="2" fill="none" stroke="#000" stroke-width="1.300"/><path d="M5 11l4 5" stroke="#000" stroke-width="1.600"/><path d="M1 13c2 0 3 1 3 3" fill="none" stroke="#000"/></svg>
<span class="a" style="left:640px;top:686px;font-size:14px;transform:scaleX(0.970);">Alt+W - Состав работ</span>
<div class="a sunk" style="left:4px;top:715px;width:65px;height:25px;"></div>
<span class="a" style="left:9px;top:720px;font-size:13px;transform:scaleX(0.916);">1:387</span>
<div class="a sunk" style="left:76px;top:715px;width:26px;height:25px;"><svg class="a" style="left:7px;top:7px" width="11" height="11" viewBox="0 0 14 14"><circle cx="7" cy="7" r="3.600" fill="none" stroke="#202020" stroke-width="3"/><circle cx="7" cy="7" r="6" fill="none" stroke="#202020" stroke-width="2" stroke-dasharray="2.350 2.350"/></svg></div>
<div class="a rz" style="left:102px;top:715px;width:83px;height:25px;"></div>
<span class="a" style="left:114px;top:716px;font-size:12px;transform:scaleX(0.935);">Параметры</span>
<span class="a" style="left:121px;top:725px;font-size:12px;transform:scaleX(0.955);">расчета</span>
<div class="a rz" style="left:189px;top:715px;width:111px;height:25px;"></div>
<span class="a" style="left:210px;top:720px;font-size:13px;transform:scaleX(0.906);font-weight:bold">БАЗИСНЫЕ</span>
<div class="a " style="left:302px;top:716px;width:226px;height:23px;background:#000"></div>
<span class="a" style="left:304px;top:719px;font-size:14px;transform:scaleX(1.062);font-weight:bold;color:#30e030">Итого: 0.000 руб.</span>
<div class="a rz" style="left:530px;top:717px;width:20px;height:21px;"><svg class="a" style="left:3px;top:3px" width="14" height="14" viewBox="0 0 14 14"><circle cx="7" cy="7" r="5.500" fill="#a0a0a0" stroke="#606060"/><path d="M4 5h2l3-2v8l-3-2h-2z" fill="#404040"/></svg></div>
<div class="a rz" style="left:800px;top:715px;width:104px;height:25px;"></div>
<svg class="a" style="left:814px;top:720px" width="16" height="15" viewBox="0 0 16 15"><path d="M2 2l12 11M14 2L2 13" stroke="#901010" stroke-width="3.200" fill="none"/></svg>
<span class="a" style="left:835px;top:720px;font-size:14px;transform:scaleX(1.016);">Закрыть</span>
<div class="a rz" style="left:910px;top:715px;width:106px;height:25px;"></div>
<span class="a" style="left:927px;top:714px;font-size:21px;transform:scaleX(1.076);font-weight:bold;color:#20a0c0;text-shadow:1px 1px 0 #104060">?</span>
<span class="a" style="left:946px;top:720px;font-size:14px;transform:scaleX(1.034);">Справка</span>
<div id="task" class="a"><div class="a " style="left:-12px;top:1px;width:75px;height:23px;border-radius:0 12px 12px 0;background:linear-gradient(#4a4e5a 0,#2a2d36 10px,#000 11px,#0c0d12 23px);box-shadow:0 0 0 1px #3a3e4a"></div>
<svg class="a" style="left:22px;top:4px" width="18" height="16" viewBox="0 0 18 16"><path d="M2 3l6-2v6h-6zM9 1l7-1v7h-7zM2 8h6v6l-6-2zM9 8h7v7l-7-1z" fill="#686c74"/></svg>
<svg class="a" style="left:76px;top:4px" width="15" height="16" viewBox="0 0 15 16"><rect x=".5" y=".5" width="14" height="15" rx="2" fill="#f8f0f8"/><path d="M7 1l2 5l5-1l-3 4l3 4l-5-1l-2 4l-2-4l-5 1l3-4l-3-4l5 1z" fill="#e050b0"/><circle cx="7.500" cy="8" r="2" fill="#f8d040"/></svg>
<svg class="a" style="left:100px;top:4px" width="13" height="16" viewBox="0 0 13 16"><path d="M0 0h10l3 3v13h-13z" fill="#fff"/><text x="1" y="14" font-family="Liberation Sans,sans-serif" font-weight="bold" font-size="13" fill="#000">A</text></svg>
<svg class="a" style="left:121px;top:4px" width="16" height="16" viewBox="0 0 16 16"><path d="M2 0l10 9l-4 5l-10-9z" fill="#2858d8"/><path d="M4 1l5 4.500l-1.500 2l-5-4.500z" fill="#a8c8f8"/><path d="M12 9l3 3l-3 4l-4-2z" fill="#1030a0"/></svg>
<svg class="a" style="left:144px;top:4px" width="16" height="16" viewBox="0 0 16 16"><rect x="0" y="1" width="16" height="14" fill="#e8e8e0"/><rect x="1" y="2" width="14" height="12" fill="#58a8e8"/><path d="M1 14l5-8l4 5l2-2l3 5z" fill="#48b040"/><rect x="1" y="2" width="6" height="5" fill="#f0b020"/></svg>
<svg class="a" style="left:168px;top:4px" width="15" height="16" viewBox="0 0 15 16"><rect x="0" y="0" width="15" height="16" rx="2" fill="#90a8c0"/><path d="M3 2c3 3 6 8 9 12M12 2c-3 3-6 8-9 12" stroke="#e8f0f8" stroke-width="2" fill="none"/><path d="M3 2c3 3 6 8 9 12" stroke="#204878" stroke-width="1" fill="none"/></svg>
<svg class="a" style="left:190px;top:4px" width="15" height="16" viewBox="0 0 15 16"><path d="M2 1l12 0v14h-12z" fill="#e8f0fc"/><rect x="0" y="4" width="10" height="9" fill="#3868c0"/><text x="1" y="12" font-family="Liberation Sans,sans-serif" font-weight="bold" font-style="italic" font-size="9" fill="#fff">W</text></svg>
<svg class="a" style="left:213px;top:4px" width="16" height="16" viewBox="0 0 16 16"><path d="M2 1h13v14h-13z" fill="#e8f4e8"/><rect x="0" y="3" width="11" height="11" fill="#38a048"/><text x="2" y="12.500" font-family="Liberation Sans,sans-serif" font-weight="bold" font-size="10" fill="#fff">X</text></svg>
<svg class="a" style="left:236px;top:4px" width="16" height="16" viewBox="0 0 16 16"><circle cx="8" cy="8" r="8" fill="#f08018"/><circle cx="8.500" cy="7" r="4.500" fill="#3060c8"/><path d="M1 6c3 1 4 4 8 4c3 0 5-2 6-4c1 6-3 10-7 10s-8-4-7-10z" fill="#f8a020"/></svg>
<svg class="a" style="left:259px;top:4px" width="16" height="16" viewBox="0 0 16 16"><circle cx="8" cy="8" r="7" fill="#f8e8d0" stroke="#e87028" stroke-width="2"/><text x="2.500" y="12" font-family="Liberation Sans,sans-serif" font-weight="bold" font-size="11" fill="#e86020">@</text></svg>
<svg class="a" style="left:282px;top:4px" width="16" height="16" viewBox="0 0 16 16"><rect x="0" y="1" width="16" height="14" fill="#2848d0"/><path d="M2 3l6 10h-6z" fill="#90b0f8"/><rect x="10" y="2" width="5" height="12" fill="#d0d8f0"/><path d="M11 4h3M11 7h3M11 10h3" stroke="#203080"/></svg>
<svg class="a" style="left:305px;top:3px" width="17" height="17" viewBox="0 0 17 17"><rect x="0" y="0" width="17" height="12" fill="#1828c0" stroke="#0a1060"/><rect x="2" y="2" width="13" height="2" fill="#90a8f0"/><path d="M8.500 12v3M4 16l4.500-2l4.500 2" stroke="#303848" stroke-width="1.500" fill="none"/></svg>
<span class="a" style="left:336px;top:2px;font-weight:bold;font-size:13px;color:#3040d0">»</span>
<div class="a " style="left:351px;top:2px;width:160px;height:20px;border-radius:3px;background:linear-gradient(#4a4e5a,#2a2c36);box-shadow:inset 0 0 0 1px #3a3e48"></div>
<svg class="a" style="left:362px;top:3px" width="17" height="17" viewBox="0 0 17 17"><ellipse cx="8" cy="4.500" rx="5.500" ry="3.500" fill="#c0b018" stroke="#484000"/><ellipse cx="6.500" cy="9.500" rx="5.500" ry="3.500" fill="#a89808" stroke="#484000"/><ellipse cx="11" cy="12.500" rx="5" ry="3.500" fill="#d0c020" stroke="#484000"/></svg>
<span class="a" style="left:382px;top:5px;font-size:12px;transform:scaleX(0.883);color:#fff">WinРИК 1.3</span>
<div class="a " style="left:847px;top:2px;width:17px;height:19px;background:#565a64"></div>
<span class="a" style="left:849px;top:6px;font-size:11px;transform:scaleX(0.868);color:#fff">RU</span>
<span class="a" style="left:878px;top:6px;font-size:11px;transform:scaleX(0.943);color:#fff">РАБОТА</span>
<span class="a" style="left:926px;top:3px;font-weight:bold;font-size:13px;color:#3040d0">»</span>
<div class="a " style="left:962px;top:2px;width:16px;height:16px;border-radius:8px;background:#f0a020"></div>
<span class="a" style="left:937px;top:5px;font-size:13px;transform:scaleX(0.971);font-weight:bold;color:#fff;text-shadow:-1px -1px 0 #000,1px -1px 0 #000,-1px 1px 0 #000,1px 1px 0 #000,0 1px 0 #000,1px 0 0 #000">CMET4UK.RU</span></div>
</body>
</html>
